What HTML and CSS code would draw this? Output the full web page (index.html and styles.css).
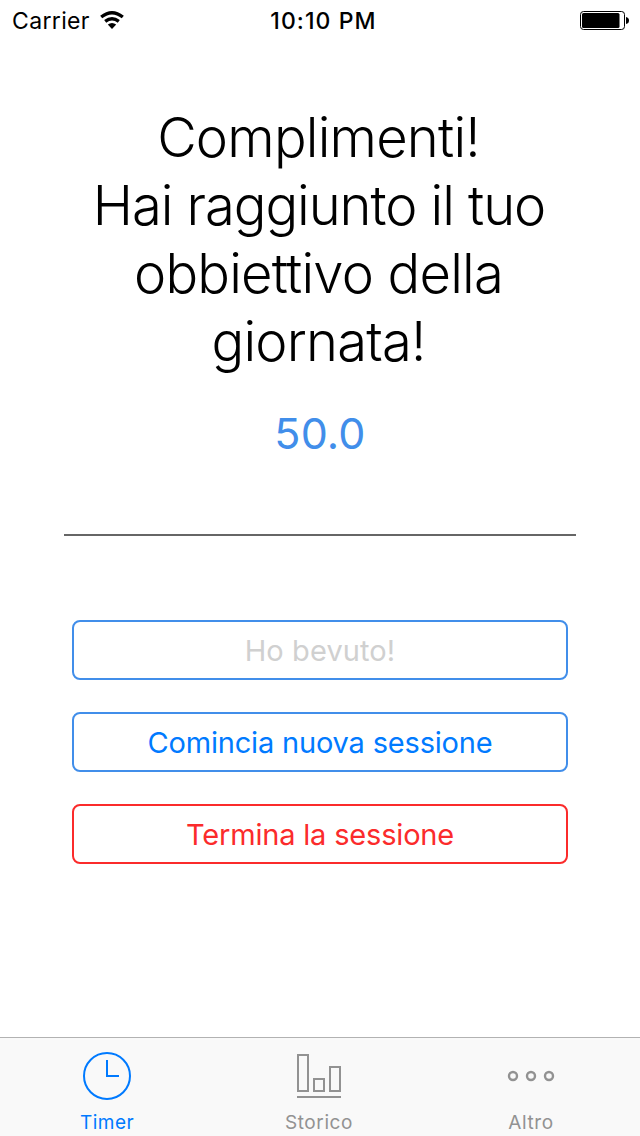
FILE: index.html
```html
<!DOCTYPE html>
<html lang="it">
<head>
<meta charset="utf-8">
<title>Timer</title>
<link rel="stylesheet" href="styles.css">
</head>
<body>
<div class="screen">
  <header class="status">
    <div class="status-left"><span class="carrier">Carrier</span>
      <svg class="wifi" width="24" height="18" viewBox="0 0 24 18" fill="none" stroke="#000" stroke-width="3.3"><path d="M1.2 6Q12-2.6 22.8 6M5.2 10.4Q12 5 18.8 10.4"/><path d="M7.8 13.6Q12 10.6 16.2 13.6L12 18Z" fill="#000" stroke="none"/></svg>
    </div>
    <span class="clock">10:10 PM</span>
    <svg class="battery" width="50" height="20" viewBox="0 0 50 20"><rect x=".5" y=".5" width="44" height="18" rx="3" fill="none" stroke="#000"/><rect x="2" y="2" width="37.5" height="15" rx="1.5"/><path d="M46 6q3 .5 3 3.5t-3 3.5z"/></svg>
  </header>
  <main class="content">
    <h1 class="message"><span>Complimenti!</span><span class="tight">Hai raggiunto il tuo</span><span>obbiettivo della</span><span>giornata!</span></h1>
    <div class="value">50.0</div>
    <hr class="divider">
    <div class="actions">
      <button class="btn disabled">Ho bevuto!</button>
      <button class="btn primary">Comincia nuova sessione</button>
      <button class="btn danger">Termina la sessione</button>
    </div>
  </main>
  <nav class="tabs">
    <a class="tab active"><svg width="50" height="50" viewBox="0 0 50 50" fill="none" stroke="currentColor" stroke-width="2"><circle cx="25" cy="25" r="23"/><path d="M25 9v16h12"/></svg><span>Timer</span></a>
    <a class="tab"><svg width="50" height="50" viewBox="0 0 50 50" fill="none" stroke="currentColor" stroke-width="2"><path d="M4 4h10v36H4zM20 28h10v12H20zM36 16h10v24H36zM3 46h44"/></svg><span>Storico</span></a>
    <a class="tab"><svg width="50" height="50" viewBox="0 0 50 50" fill="none" stroke="currentColor" stroke-width="2.4"><circle cx="7" cy="25" r="4"/><circle cx="25" cy="25" r="4"/><circle cx="43" cy="25" r="4"/></svg><span>Altro</span></a>
  </nav>
</div>
</body>
</html>
```
FILE: styles.css
```css
* { box-sizing: border-box; }
body { margin: 0; font-family: Inter, "Liberation Sans", sans-serif; background: #fff; color: #000; }
.screen { width: 640px; height: 1136px; display: flex; flex-direction: column; }
.status { height: 42px; display: grid; grid-template-columns: 1fr auto 1fr; align-items: center; padding: 0 10px 0 12px; font-size: 23px; }
.status-left { display: flex; align-items: center; gap: 10px; }
.carrier { letter-spacing: .35px; }
.wifi { margin-top: -2px; }
.clock { font-weight: 550; letter-spacing: 1.1px; padding-left: 5px; }
.battery { justify-self: end; }
.content { flex: 1; display: flex; flex-direction: column; padding: 61px 64px 0; }
.message { margin: 0; display: flex; flex-direction: column; align-items: center; font-size: 54.3px; font-weight: 300; line-height: 68px; white-space: nowrap; letter-spacing: -.78px; font-variant-ligatures: none; }
.message span { margin-left: -3px; }
.message .tight { letter-spacing: -1.05px; margin-left: -2px; }
.value { margin-top: 28px; text-align: center; font-size: 43px; line-height: 60px; letter-spacing: .2px; color: #418eea; }
.divider { width: 100%; height: 2px; margin: 71px 0 84px; border: 0; background: #666; }
.actions { display: flex; flex-direction: column; gap: 32px; padding: 0 8px; }
.btn { height: 60px; border: 2px solid #418eea; border-radius: 8px; background: #fff; font: 400 29px Inter, sans-serif; padding: 0; letter-spacing: -.18px; }
.disabled { color: #d0d0d0; letter-spacing: .1px; }
.primary { color: #007aff; }
.danger { color: #fb2b2b; border-color: #fb2b2b; }
.tabs { height: 99px; border-top: 1px solid #b2b2b2; background: #f9f9f9; display: grid; grid-template-columns: 214px 210px 214px; }
.tab { display: flex; flex-direction: column; align-items: center; padding-top: 13px; color: #929292; font-size: 19px; line-height: 24px; letter-spacing: .6px; gap: 10px; }
.active { color: #007aff; letter-spacing: .5px; }
```
